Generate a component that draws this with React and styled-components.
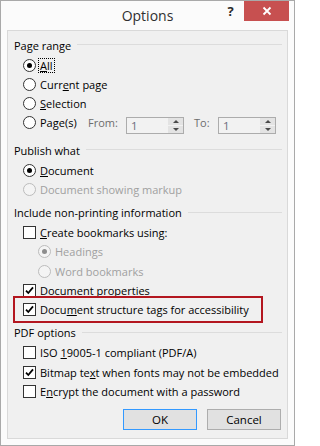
import React from "react";
import styled, { createGlobalStyle, css } from "styled-components";

const GlobalStyle = createGlobalStyle`
  html, body { margin: 0; padding: 0; background: #ffffff; }
  body { font-family: "Open Sans", "Noto Sans", sans-serif; }
`;

const Window = styled.div`
  width: 295px;
  height: 446px;
  box-sizing: border-box;
  border: 1px solid #a9a9a9;
  background: #fbfbfb;
  display: flex;
  flex-direction: column;
  font-family: "Open Sans", "Noto Sans", sans-serif;
  font-size: 11px;
  color: #000;
  -webkit-font-smoothing: antialiased;
`;

const TitleBar = styled.div`
  height: 29px;
  flex: none;
  display: grid;
  grid-template-columns: 1fr auto 1fr;
  align-items: start;
`;

const Title = styled.div`
  grid-column: 2;
  font-size: 14px;
  line-height: 29px;
  color: #2f2f2f;
`;

const Controls = styled.div`
  grid-column: 3;
  justify-self: end;
  display: flex;
  margin-right: 5px;
`;

const HelpButton = styled.div`
  width: 27px;
  height: 20px;
  display: flex;
  align-items: center;
  justify-content: center;
  font-weight: 700;
  font-size: 13px;
  color: #2a2a2a;
`;

const CloseButton = styled.div`
  width: 45px;
  height: 20px;
  background: #c75050;
  display: flex;
  align-items: center;
  justify-content: center;
`;

const Panel = styled.div`
  flex: 1;
  margin: 0 6px 6px;
  border: 1px solid #d9d9d9;
  background: #f0f0f0;
  padding: 3.5px 5px 0 6px;
  display: flex;
  flex-direction: column;
`;

const Group = styled.div`
  display: flex;
  flex-direction: column;
  & + & { margin-top: 3px; }
`;

const Header = styled.div`
  height: 21px;
  display: flex;
  align-items: center;
  white-space: nowrap;
  &::after {
    content: "";
    flex: 1;
    height: 1px;
    margin-left: 6px;
    margin-top: -1px;
    background: #dcdcdc;
  }
`;

const Row = styled.div`
  height: ${(p) => p.$height || 19.25}px;
  display: flex;
  align-items: ${(p) => (p.$top ? "flex-start" : "center")};
  padding-left: ${(p) => p.$indent || 9}px;
  white-space: nowrap;
  ${(p) =>
    p.$highlight &&
    css`
      margin-left: 2.5px;
      width: 242px;
      padding-left: 6.5px;
      box-sizing: border-box;
      outline: 2px solid #b3161f;
      outline-offset: 2.5px;
    `}
`;

const Item = styled.div`
  display: flex;
  align-items: center;
  height: 19.25px;
  width: ${(p) => (p.$width ? `${p.$width}px` : "auto")};
  flex: none;
`;

const RadioCircle = styled.span`
  width: 13px;
  height: 13px;
  box-sizing: border-box;
  border-radius: 50%;
  border: 1px solid ${(p) => (p.$disabled ? "#bcbcbc" : "#333333")};
  background: ${(p) => (p.$disabled ? "#f4f4f4" : "#ffffff")};
  display: flex;
  align-items: center;
  justify-content: center;
  flex: none;
  &::after {
    content: "";
    display: ${(p) => (p.$checked ? "block" : "none")};
    width: 5px;
    height: 5px;
    border-radius: 50%;
    background: ${(p) => (p.$disabled ? "#8d8d8d" : "#000")};
  }
`;

const CheckBox = styled.span`
  width: 13px;
  height: 13px;
  box-sizing: border-box;
  border: 1px solid #333333;
  background: #ffffff;
  display: flex;
  align-items: center;
  justify-content: center;
  flex: none;
`;

const Label = styled.span`
  margin-left: 4px;
  color: ${(p) => (p.$disabled ? "#a0a0a0" : "#000")};
  ${(p) =>
    p.$focus &&
    css`
      margin-left: 2px;
      padding: 0 1px;
      border: 1px dotted #000;
      line-height: 13px;
    `}
  u { text-decoration-thickness: 1px; text-underline-offset: 1px; }
`;

const FieldLabel = styled.span`
  width: ${(p) => p.$width}px;
  height: 19.25px;
  display: flex;
  align-items: center;
  flex: none;
  color: #6d6d6d;
`;

const Spinner = styled.div`
  width: 58px;
  height: 17px;
  margin-top: 3.75px;
  box-sizing: border-box;
  border: 1px solid #acacac;
  background: #f2f2f2;
  display: flex;
  flex: none;
`;

const SpinValue = styled.span`
  flex: 1;
  padding-left: 4px;
  line-height: 15px;
  color: #6d6d80;
  font-size: 11.5px;
`;

const SpinButtons = styled.div`
  width: 15px;
  display: flex;
  flex-direction: column;
  gap: 1px;
  background: #f2f2f2;
`;

const SpinButton = styled.div`
  flex: 1;
  background: #e3e3e3;
  display: flex;
  align-items: center;
  justify-content: center;
  &::after {
    content: "";
    border-left: 3px solid transparent;
    border-right: 3px solid transparent;
    ${(p) =>
      p.$down
        ? css`border-top: 3px solid #4a4a4a;`
        : css`border-bottom: 3px solid #4a4a4a;`}
  }
`;

const ButtonRow = styled.div`
  display: flex;
  justify-content: flex-end;
  gap: 10px;
  margin-top: 8px;
  padding-right: 1px;
`;

const Button = styled.div`
  width: 74px;
  height: 21px;
  box-sizing: border-box;
  border: 1px solid ${(p) => (p.$default ? "#3399ff" : "#adadad")};
  background: #e1e1e1;
  display: flex;
  align-items: center;
  justify-content: center;
  font-size: 11.5px;
  color: #000;
`;

const Check = () => (
  <svg width="11" height="11" viewBox="0 0 11 11">
    <path d="M2 5.6 L4.3 8 L9 2.4" fill="none" stroke="#000" strokeWidth="1.8" />
  </svg>
);

const Radio = ({ checked, disabled, children, focus }) => (
  <Item>
    <RadioCircle $checked={checked} $disabled={disabled} />
    <Label $disabled={disabled} $focus={focus}>{children}</Label>
  </Item>
);

const Checkbox = ({ checked, children }) => (
  <Item>
    <CheckBox>{checked && <Check />}</CheckBox>
    <Label>{children}</Label>
  </Item>
);

const SpinBox = () => (
  <Spinner>
    <SpinValue>1</SpinValue>
    <SpinButtons>
      <SpinButton />
      <SpinButton $down />
    </SpinButtons>
  </Spinner>
);

export default function App() {
  return (
    <>
      <GlobalStyle />
      <Window>
        <TitleBar>
          <Title>Options</Title>
          <Controls>
            <HelpButton>?</HelpButton>
            <CloseButton>
              <svg width="10" height="10" viewBox="0 0 10 10">
                <path d="M1.5 1.5 L8.5 8.5 M8.5 1.5 L1.5 8.5" stroke="#fff" strokeWidth="1.8" />
              </svg>
            </CloseButton>
          </Controls>
        </TitleBar>
        <Panel>
          <Group>
            <Header>Page range</Header>
            <Row>
              <Radio checked focus><u>A</u>ll</Radio>
            </Row>
            <Row>
              <Radio>Curr<u>e</u>nt page</Radio>
            </Row>
            <Row>
              <Radio><u>S</u>election</Radio>
            </Row>
            <Row $height={23.25} $top>
              <Item $width={65}>
                <RadioCircle />
                <Label>Pa<u>g</u>e(s)</Label>
              </Item>
              <FieldLabel $width={38}>From:</FieldLabel>
              <SpinBox />
              <FieldLabel $width={24} style={{ marginLeft: 10 }}>To:</FieldLabel>
              <SpinBox />
            </Row>
          </Group>
          <Group>
            <Header>Publish what</Header>
            <Row>
              <Radio checked><u>D</u>ocument</Radio>
            </Row>
            <Row>
              <Radio disabled>Document showing markup</Radio>
            </Row>
          </Group>
          <Group>
            <Header>Include non-printing information</Header>
            <Row>
              <Checkbox><u>C</u>reate bookmarks using:</Checkbox>
            </Row>
            <Row $indent={24}>
              <Radio checked disabled>Headings</Radio>
            </Row>
            <Row $indent={24}>
              <Radio disabled>Word bookmarks</Radio>
            </Row>
            <Row>
              <Checkbox checked>Document properties</Checkbox>
            </Row>
            <Row $highlight>
              <Checkbox checked>Docu<u>m</u>ent structure tags for accessibility</Checkbox>
            </Row>
          </Group>
          <Group>
            <Header>PDF options</Header>
            <Row>
              <Checkbox>ISO <u>1</u>9005-1 compliant (PDF/A)</Checkbox>
            </Row>
            <Row>
              <Checkbox checked>Bitmap te<u>x</u>t when fonts may not be embedded</Checkbox>
            </Row>
            <Row>
              <Checkbox>E<u>n</u>crypt the document with a password</Checkbox>
            </Row>
          </Group>
          <ButtonRow>
            <Button $default>OK</Button>
            <Button>Cancel</Button>
          </ButtonRow>
        </Panel>
      </Window>
    </>
  );
}
